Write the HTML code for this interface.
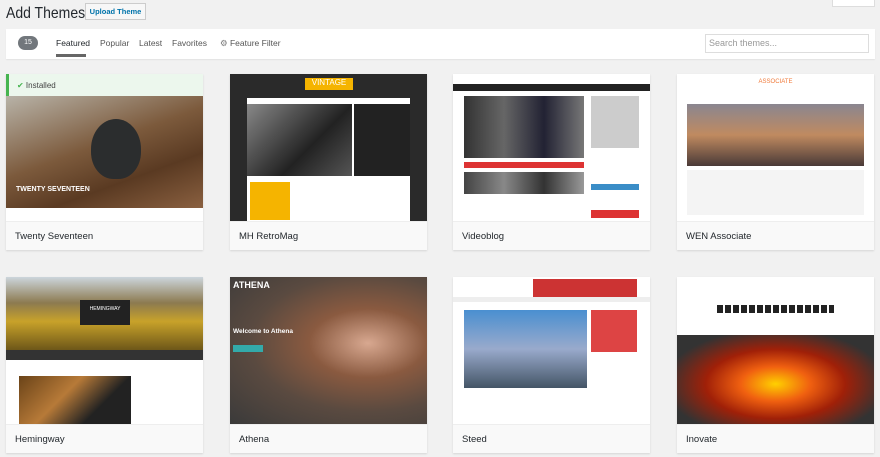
<!DOCTYPE html>
<html><head><style>
*{box-sizing:border-box;margin:0;padding:0}
body{width:880px;height:457px;background:#f1f1f1;font-family:"Liberation Sans",sans-serif;position:relative;overflow:hidden;color:#23282d}
.abs{position:absolute}
h1{position:absolute;left:6px;top:3px;font-size:14px;font-weight:400;color:#23282d;white-space:nowrap;transform:scaleY(1.15);transform-origin:top left}
.up{position:absolute;left:85px;top:3px;width:61px;height:17px;border:1px solid #ccc;background:#f7f7f7;font-size:7.5px;color:#0073aa;text-align:center;line-height:15px;font-weight:bold}
.help{position:absolute;left:832px;top:-6px;width:43px;height:13px;background:#fff;border:1px solid #ddd}
.bar{position:absolute;left:6px;top:29px;width:869px;height:30px;background:#fff;box-shadow:0 1px 1px rgba(0,0,0,.06)}
.cnt{position:absolute;left:12px;top:7px;width:20px;height:14px;border-radius:7px;background:#72777c;color:#fff;font-size:7px;text-align:center;line-height:14px}
.tab{position:absolute;top:9px;font-size:8.5px;color:#555}
.search{position:absolute;left:699px;top:5px;width:164px;height:19px;border:1px solid #ddd;font-size:9px;color:#999;padding:3px 3px}
.card{position:absolute;width:197px;height:176px;background:#fff;box-shadow:0 1px 2px rgba(0,0,0,.12)}
.shot{position:absolute;left:0;top:0;width:197px;height:147px;overflow:hidden}
.name{position:absolute;left:0;top:147px;width:197px;height:29px;background:#f9f9f9;border-top:1px solid #eee;font-size:9.5px;padding:9px 9px;color:#23282d}
</style></head><body>
<h1>Add Themes</h1><div class="up">Upload Theme</div><div class="help"></div>
<div class="bar"><div class="cnt">15</div>
<div class="tab" style="left:50px;color:#23282d">Featured</div><div class="abs" style="left:50px;top:25px;width:30px;height:3px;background:#666"></div>
<div class="tab" style="left:94px">Popular</div><div class="tab" style="left:133px">Latest</div><div class="tab" style="left:166px">Favorites</div>
<div class="tab" style="left:214px"><span style="color:#777">⚙</span> Feature Filter</div>
<div class="search">Search themes...</div></div>

<div class="card" style="left:6px;top:74px"><div class="shot">
<div class="abs" style="left:0;top:0;width:197px;height:22px;background:#ecf7ed;border-left:3px solid #46b450;font-size:8px;padding:7px 8px;color:#444"><span style="color:#46b450">✔</span> Installed</div>
<div class="abs" style="left:0;top:22px;width:197px;height:112px;background:linear-gradient(160deg,#b8b3a8 0%,#7c5a3c 45%,#5a3a22 70%,#8a6040 100%)"></div>
<div class="abs" style="left:85px;top:45px;width:50px;height:60px;border-radius:50% 50% 45% 45%;background:#2b2d2e"></div>
<div class="abs" style="left:10px;top:112px;font-size:7px;color:#fff;font-weight:bold">TWENTY SEVENTEEN</div>
<div class="abs" style="left:0;top:134px;width:197px;height:13px;background:#fff"></div></div>
<div class="name">Twenty Seventeen</div></div>

<div class="card" style="left:230px;top:74px"><div class="shot" style="background:#2a2a2a">
<div class="abs" style="left:75px;top:4px;width:48px;height:12px;background:#f5b400;color:#fff;font-size:8px;text-align:center">VINTAGE</div>
<div class="abs" style="left:17px;top:24px;width:163px;height:123px;background:#fff"></div>
<div class="abs" style="left:17px;top:30px;width:105px;height:72px;background:linear-gradient(135deg,#888,#222 60%,#555)"></div>
<div class="abs" style="left:124px;top:30px;width:56px;height:72px;background:#222"></div>
<div class="abs" style="left:20px;top:108px;width:40px;height:38px;background:#f5b400"></div></div>
<div class="name">MH RetroMag</div></div>

<div class="card" style="left:453px;top:74px"><div class="shot" style="background:#fff">
<div class="abs" style="left:0;top:10px;width:197px;height:7px;background:#222"></div>
<div class="abs" style="left:11px;top:22px;width:120px;height:62px;background:linear-gradient(90deg,#333,#666,#223,#777)"></div>
<div class="abs" style="left:11px;top:88px;width:120px;height:6px;background:#d33"></div>
<div class="abs" style="left:11px;top:98px;width:120px;height:22px;background:linear-gradient(90deg,#444,#888,#333,#999)"></div>
<div class="abs" style="left:138px;top:22px;width:48px;height:52px;background:#ccc"></div>
<div class="abs" style="left:138px;top:110px;width:48px;height:6px;background:#3a8dc7"></div>
<div class="abs" style="left:138px;top:136px;width:48px;height:8px;background:#d33"></div></div>
<div class="name">Videoblog</div></div>

<div class="card" style="left:677px;top:74px"><div class="shot" style="background:#fff">
<div class="abs" style="left:0;top:5px;width:197px;text-align:center;font-size:6px;color:#f07a3a">ASSOCIATE</div>
<div class="abs" style="left:10px;top:30px;width:177px;height:62px;background:linear-gradient(180deg,#8a8690,#c08a60 50%,#4a3a38)"></div>
<div class="abs" style="left:10px;top:96px;width:177px;height:45px;background:#f4f4f4"></div></div>
<div class="name">WEN Associate</div></div>

<div class="card" style="left:6px;top:277px"><div class="shot" style="background:#fff">
<div class="abs" style="left:0;top:0;width:197px;height:74px;background:linear-gradient(180deg,#ccd5dc 0%,#8c7a50 35%,#c8a22a 60%,#6a5418 100%)"></div>
<div class="abs" style="left:74px;top:23px;width:50px;height:25px;background:#222;color:#fff;font-size:5px;text-align:center;padding-top:6px">HEMINGWAY</div>
<div class="abs" style="left:0;top:73px;width:197px;height:10px;background:#333"></div>
<div class="abs" style="left:13px;top:99px;width:112px;height:48px;background:linear-gradient(135deg,#6a4318,#b77a38 40%,#222 70%)"></div></div>
<div class="name">Hemingway</div></div>

<div class="card" style="left:230px;top:277px"><div class="shot" style="background:radial-gradient(ellipse at 70% 45%,#d8a890 0%,#8a5a40 30%,#5a4a40 60%,#3a3a3a 100%)">
<div class="abs" style="left:3px;top:3px;font-size:9px;color:#fff;font-weight:bold">ATHENA</div>
<div class="abs" style="left:3px;top:51px;font-size:6.5px;color:#fff;font-weight:bold">Welcome to Athena</div>
<div class="abs" style="left:3px;top:68px;width:30px;height:7px;background:#3aa"></div></div>
<div class="name">Athena</div></div>

<div class="card" style="left:453px;top:277px"><div class="shot" style="background:#fff">
<div class="abs" style="left:80px;top:2px;width:104px;height:18px;background:#c33"></div>
<div class="abs" style="left:0;top:20px;width:197px;height:5px;background:#eee"></div>
<div class="abs" style="left:11px;top:33px;width:123px;height:78px;background:linear-gradient(180deg,#4a8fd0,#9ac 50%,#456 100%)"></div>
<div class="abs" style="left:138px;top:33px;width:46px;height:42px;background:#d44"></div></div>
<div class="name">Steed</div></div>

<div class="card" style="left:677px;top:277px"><div class="shot" style="background:#fff">
<div class="abs" style="left:40px;top:28px;width:117px;height:8px;background:repeating-linear-gradient(90deg,#222 0 6px,#fff 6px 8px)"></div>
<div class="abs" style="left:0;top:58px;width:197px;height:89px;background:radial-gradient(ellipse at 50% 55%,#ffd000 0%,#f06010 25%,#a02008 50%,#333 80%)"></div></div>
<div class="name">Inovate</div></div>
</body></html>
